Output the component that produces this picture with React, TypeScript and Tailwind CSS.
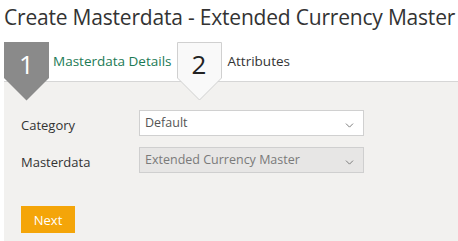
import { ChevronDown } from "lucide-react";

function StepBadge({ n, active }: { n: string; active: boolean }) {
  return (
    <div className="relative w-[45px] h-[59px] shrink-0">
      <svg width="45" height="59" viewBox="0 0 45 59" className="absolute left-0 top-0">
        {active ? (
          <polygon points="0,0 45,0 45,36 22.5,58.5 0,36" fill="#8a8a8a" />
        ) : (
          <polygon
            points="0.5,0.5 44.5,0.5 44.5,36 22.5,58 0.5,36"
            fill="#f9f9f9"
            stroke="#d0d0d0"
          />
        )}
      </svg>
      <span
        className={`absolute left-0 right-0 top-[6px] text-center text-[26px] leading-[32px] ${
          active ? "text-white" : "text-[#222]"
        }`}
      >
        {n}
      </span>
    </div>
  );
}

function SelectBox({ value, disabled }: { value: string; disabled?: boolean }) {
  return (
    <div
      className={`flex items-center justify-between w-[225px] h-[26px] pl-[5px] pr-[7px] border ${
        disabled
          ? "bg-[#e7e6e5] border-[#cfcfcf] text-[#7a7a7a]"
          : "bg-white border-[#d0d0d0] text-[#555]"
      }`}
    >
      <span className="text-[12.5px] leading-[16px] -mt-[1px]">{value}</span>
      <ChevronDown className="w-[13px] h-[13px] mt-[4px] text-[#777]" strokeWidth={1.75} />
    </div>
  );
}

export default function App() {
  return (
    <div
      className="w-[458px] h-[241px] bg-white flex flex-col overflow-hidden"
      style={{ fontFamily: '"Open Sans", "Noto Sans", sans-serif' }}
    >
      <h1 className="pl-[4px] pt-[2px] h-[42px] whitespace-nowrap text-[21px] leading-[30px] text-[#333] tracking-[-0.2px]">
        Create Masterdata - Extended Currency Master
      </h1>

      <div className="relative z-10 flex items-start h-[39px] pl-[4px]">
        <StepBadge n="1" active />
        <span className="ml-[4px] mt-[10px] text-[13.5px] leading-[18px] text-[#1c7a55]">
          Masterdata Details
        </span>
        <div className="ml-[5px]">
          <StepBadge n="2" active={false} />
        </div>
        <span className="ml-[6px] mt-[10px] text-[13.5px] leading-[18px] text-[#333]">
          Attributes
        </span>
      </div>

      <div className="flex-1 ml-[4px] bg-[#f2f1ef] border-t border-[#d6d6d6] pl-[17px] pt-[28px]">
        <div className="flex items-center h-[26px]">
          <span className="w-[118px] text-[13px] leading-[18px] mt-[3px] text-[#333]">Category</span>
          <SelectBox value="Default" />
        </div>
        <div className="flex items-center h-[26px] mt-[11px]">
          <span className="w-[118px] text-[13px] leading-[18px] mt-[3px] text-[#333]">Masterdata</span>
          <SelectBox value="Extended Currency Master" disabled />
        </div>
        <button className="mt-[33px] w-[54px] h-[27px] bg-[#f4a509] text-white text-[13px] leading-[18px]">
          Next
        </button>
      </div>
    </div>
  );
}
